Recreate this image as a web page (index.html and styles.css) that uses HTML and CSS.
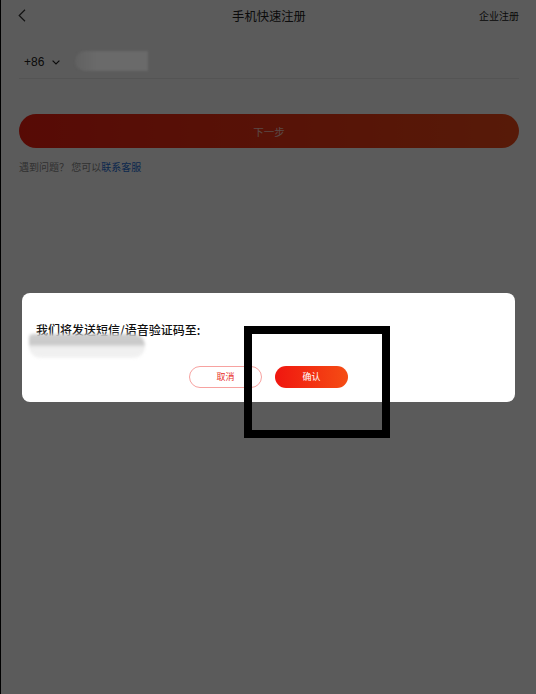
FILE: index.html
```html
<!DOCTYPE html>
<html lang="zh">
<head>
<meta charset="utf-8">
<link rel="stylesheet" href="styles.css">
</head>
<body>
<div class="page">
  <header class="topbar">
    <svg class="back" width="8" height="13" viewBox="0 0 8 13"><path d="M7 0.8 L1.2 6.5 L7 12.2" fill="none" stroke="#333" stroke-width="1.2"/></svg>
    <div class="title">手机快速注册</div>
    <div class="corp">企业注册</div>
  </header>
  <div class="phone-row">
    <span class="code">+86</span>
    <svg class="caret" width="8" height="5" viewBox="0 0 8 5"><path d="M0.6 0.6 L4 4 L7.4 0.6" fill="none" stroke="#222" stroke-width="1.2"/></svg>
    <span class="masked"></span>
  </div>
  <div class="next-btn">下一步</div>
  <p class="help">遇到问题？ 您可以<span class="link">联系客服</span></p>
</div>
<div class="overlay"></div>
<div class="dialog-wrap">
  <div class="dialog">
    <p class="dialog-text">我们将发送短信/语音验证码至:</p>
    <div class="dialog-mask"></div>
    <div class="actions">
      <span class="btn cancel">取消</span>
      <span class="btn confirm">确认</span>
    </div>
  </div>
</div>
<div class="annotation"></div>
</body>
</html>
```

FILE: styles.css
```css
html, body {
  margin: 0;
  padding: 0;
  width: 536px;
  height: 694px;
  overflow: hidden;
  background: #fff;
  font-family: "Noto Sans CJK SC", "Noto Sans", sans-serif;
}
body { border-left: 1px solid #000; box-sizing: border-box; }

.page {
  padding: 0 17px 0 17px;
  color: #333;
}

.topbar {
  display: grid;
  grid-template-columns: 1fr auto 1fr;
  align-items: center;
  height: 31px;
}
.title {
  font-size: 12.3px;
  color: #222;
  margin-left: 1px;
}
.corp {
  justify-self: end;
  font-size: 10px;
  color: #222;
  margin-top: -1px;
}

.phone-row {
  display: flex;
  align-items: center;
  margin: 14px 0 0 1px;
  height: 33px;
  border-bottom: 1px solid #ececec;
  padding-left: 5px;
}
.code { font-size: 12px; color: #222; font-family: "Liberation Sans", sans-serif; }
.caret { margin-left: 8px; margin-top: 1px; }
.masked {
  position: relative;
  z-index: 20;
  margin-left: 15px;
  margin-top: -2px;
  width: 73px;
  height: 20px;
  border-radius: 10px 0 0 10px;
  background: linear-gradient(90deg, #616161 0%, #6a6a6a 30%, #6a6a6a 100%);
  filter: blur(1px);
}

.next-btn {
  margin: 35px 0 0 1px;
  height: 34px;
  border-radius: 17px;
  background: linear-gradient(90deg, #f41e10 0%, #f44a18 100%);
  color: rgba(255,255,255,0.75);
  font-size: 10.5px;
  display: flex;
  align-items: center;
  justify-content: center;
}

.help {
  margin: 11px 0 0 1px;
  font-size: 10px;
  color: #8a8a8a;
}
.link { color: #1e6fd9; }

.overlay {
  position: fixed;
  inset: 0;
  background: rgba(0,0,0,0.645);
  z-index: 10;
}

.dialog-wrap {
  position: fixed;
  inset: 0;
  z-index: 30;
  display: flex;
  align-items: center;
  justify-content: center;
  padding-left: 1px;
}
.dialog {
  width: 493px;
  height: 109px;
  box-sizing: border-box;
  background: #fff;
  border-radius: 8px;
  padding: 29px 14px 0 14px;
  display: flex;
  flex-direction: column;
}
.dialog-text {
  margin: 0;
  font-size: 12px;
  line-height: 16px;
  font-weight: 500;
  color: #111;
}
.dialog-mask {
  width: 116px;
  height: 24px;
  margin: -4px 0 0 -7px;
  border-radius: 4px 12px 12px 12px;
  background: linear-gradient(180deg, #cfcfcf 0%, #c8c8c8 40%, #eeeeee 55%, #f2f2f2 100%);
  filter: blur(1.5px);
}
.actions {
  display: flex;
  justify-content: center;
  gap: 13px;
  margin-top: 8px;
}
.btn {
  width: 73px;
  height: 22px;
  box-sizing: border-box;
  border-radius: 11px;
  font-size: 9px;
  display: flex;
  align-items: center;
  justify-content: center;
}
.cancel {
  border: 1px solid #f7a2a0;
  color: #e8302a;
}
.confirm {
  background: linear-gradient(90deg, #f0160f 0%, #f54d14 100%);
  color: #fff;
}

.annotation {
  position: fixed;
  left: 244px;
  top: 326px;
  width: 146px;
  height: 112px;
  box-sizing: border-box;
  border: 8px solid #000;
  z-index: 40;
}
```
